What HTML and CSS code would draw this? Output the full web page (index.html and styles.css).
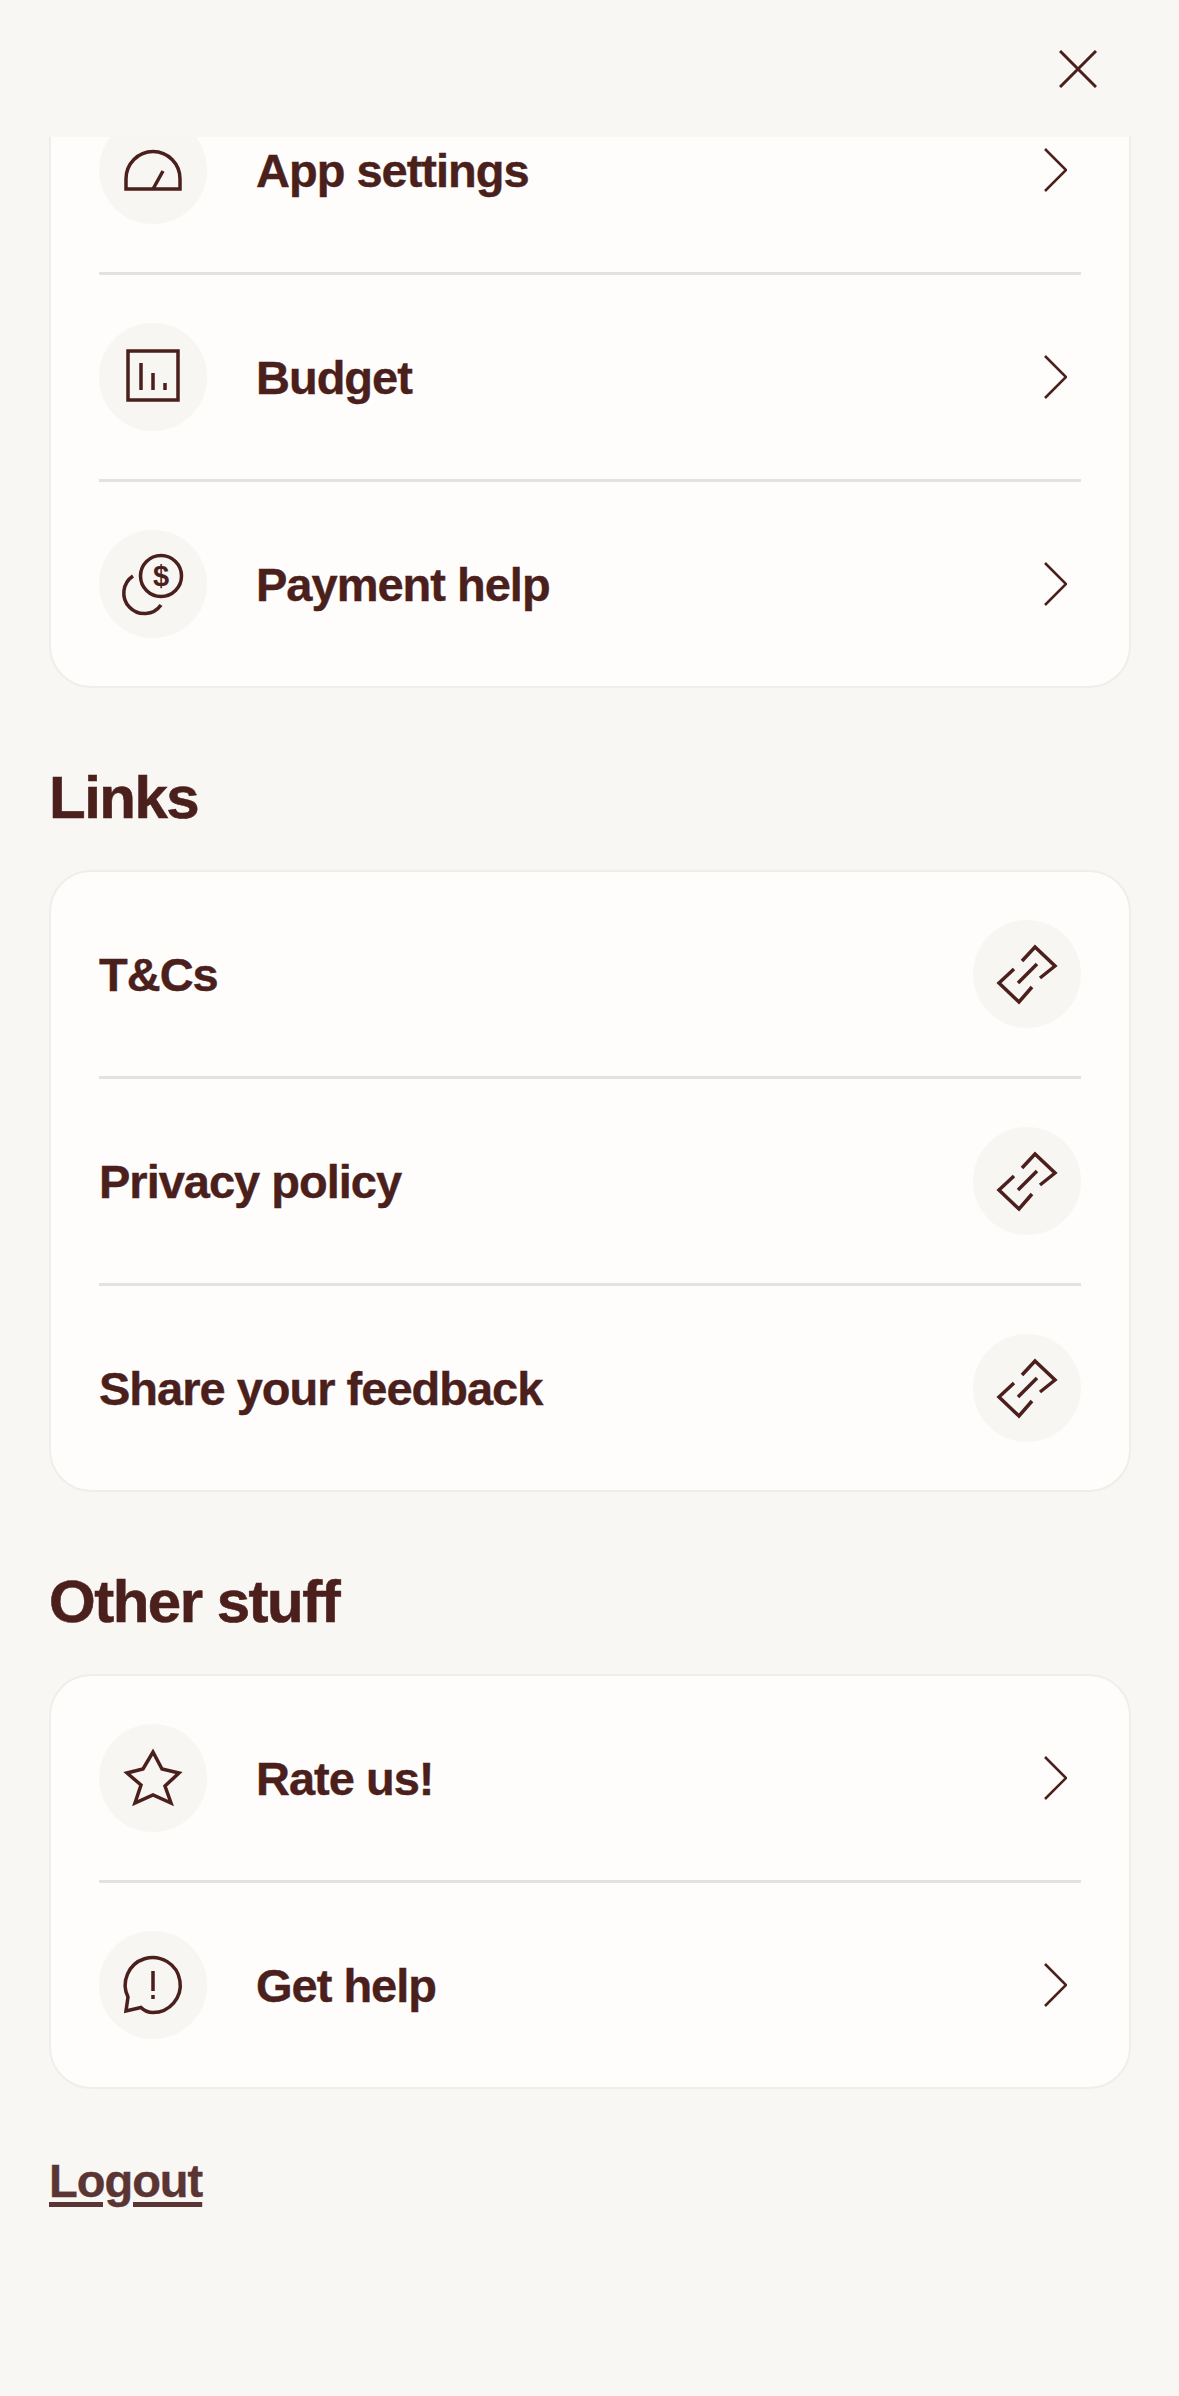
FILE: index.html
```html
<!DOCTYPE html>
<html>
  <head>
    <title>Menu</title>
    <meta name="viewport" content="width=device-width, initial-scale=1.0">
    <link rel="stylesheet" href="styles.css">
  </head>
  <body>
    <header class="top-bar">
      <svg class="close" viewBox="0 0 38 38"><path d="M1 1L37 37M37 1L1 37"/></svg>
    </header>

    <main class="content">
      <section class="card card-scrolled">
        <div class="row">
          <span class="circle">
            <svg viewBox="0 0 108 108"><path d="M27 73V63A27 27.500 0 0 1 81 63V73ZM54 73L64 55"/></svg>
          </span>
          <span class="label">App settings</span>
          <svg class="chevron" viewBox="0 0 24 44"><path d="M2 1L23 22L2 43"/></svg>
        </div>
        <div class="row">
          <span class="circle">
            <svg viewBox="0 0 108 108"><path d="M29 28H79V77H29ZM42 40V67M54 50V67M66 60V67"/></svg>
          </span>
          <span class="label">Budget</span>
          <svg class="chevron" viewBox="0 0 24 44"><path d="M2 1L23 22L2 43"/></svg>
        </div>
        <div class="row">
          <span class="circle">
            <svg viewBox="0 0 108 108">
              <circle cx="62" cy="46" r="20.500"/>
              <path d="M34 46A20.500 20.500 0 1 0 62 75"/>
              <text class="dollar" x="62" y="56" text-anchor="middle">$</text>
            </svg>
          </span>
          <span class="label">Payment help</span>
          <svg class="chevron" viewBox="0 0 24 44"><path d="M2 1L23 22L2 43"/></svg>
        </div>
      </section>

      <h2 class="section-title">Links</h2>
      <section class="card">
        <div class="row row-link">
          <span class="label">T&amp;Cs</span>
          <span class="circle">
            <svg viewBox="0 0 108 108"><path d="M49 41L62 27L82 46L67 58M41 49L26 63L46 82L59 67M45 63L64 44"/></svg>
          </span>
        </div>
        <div class="row row-link">
          <span class="label">Privacy policy</span>
          <span class="circle">
            <svg viewBox="0 0 108 108"><path d="M49 41L62 27L82 46L67 58M41 49L26 63L46 82L59 67M45 63L64 44"/></svg>
          </span>
        </div>
        <div class="row row-link">
          <span class="label">Share your feedback</span>
          <span class="circle">
            <svg viewBox="0 0 108 108"><path d="M49 41L62 27L82 46L67 58M41 49L26 63L46 82L59 67M45 63L64 44"/></svg>
          </span>
        </div>
      </section>

      <h2 class="section-title">Other stuff</h2>
      <section class="card">
        <div class="row">
          <span class="circle">
            <svg viewBox="0 0 108 108"><path d="M54 28L63 45L80 49L66 62L72 79L54 71L36 79L42 61L28 49L44 45Z"/></svg>
          </span>
          <span class="label">Rate us!</span>
          <svg class="chevron" viewBox="0 0 24 44"><path d="M2 1L23 22L2 43"/></svg>
        </div>
        <div class="row">
          <span class="circle">
            <svg viewBox="0 0 108 108"><path d="M29 66L27 80L42 76.500Q47 81.500 54 81.500A27.500 27.500 0 1 0 29 66ZM54 40V60M54 64V68"/></svg>
          </span>
          <span class="label">Get help</span>
          <svg class="chevron" viewBox="0 0 24 44"><path d="M2 1L23 22L2 43"/></svg>
        </div>
      </section>

      <a class="logout" href="#">Logout</a>
    </main>
  </body>
</html>
```

FILE: styles.css
```css
html, body {
  margin: 0;
  height: 100%;
  background-color: #f8f7f4;
}
body {
  overflow: hidden;
  color: #4a1f1c;
  font-family: "Liberation Sans", Arial, sans-serif;
  font-weight: bold;
}
.top-bar {
  position: relative;
  z-index: 1;
  display: flex;
  justify-content: flex-end;
  align-items: center;
  height: 137px;
  padding: 3px 82px 0 0;
  box-sizing: border-box;
  background-color: #f8f7f4;
}
.close {
  width: 38px;
  height: 38px;
  margin-top: -2px;
}
.close path {
  fill: none;
  stroke: #4a1f1c;
  stroke-width: 3;
}
.content {
  padding: 0 48px 0 49px;
}
.card {
  background-color: #fefdfb;
  border: 2px solid #efeeeb;
  border-radius: 42px;
  padding: 0 48px;
}
/* first card is scrolled up under the top bar */
.card-scrolled {
  margin-top: -71px;
}
.row {
  display: flex;
  align-items: center;
  gap: 49px;
  height: 204px;
  border-bottom: 3px solid #e3e2e0;
}
.row:last-child {
  border-bottom: none;
}
.row-link {
  justify-content: space-between;
}
.circle {
  flex: none;
  width: 108px;
  height: 108px;
  border-radius: 50%;
  background-color: #f7f6f3;
}
.circle svg {
  display: block;
  width: 108px;
  height: 108px;
  fill: none;
  stroke: #4a1f1c;
  stroke-width: 3.500;
}
.circle .dollar {
  fill: #4a1f1c;
  stroke: none;
  font-size: 29px;
  font-weight: bold;
}
.label {
  font-size: 47px;
  letter-spacing: -1px;
  -webkit-text-stroke: 0.400px #4a1f1c;
}
.chevron {
  width: 24px;
  height: 44px;
  margin-left: auto;
  margin-right: 14px;
}
.chevron path {
  fill: none;
  stroke: #4a1f1c;
  stroke-width: 2.500;
}
.section-title {
  margin: 0;
  padding: 74px 0 36px;
  font-size: 60px;
  line-height: 72px;
  letter-spacing: -1.500px;
  -webkit-text-stroke: 0.600px #4a1f1c;
}
.logout {
  display: inline-block;
  margin-top: 64px;
  font-size: 47px;
  letter-spacing: -1px;
  color: #5a3533;
  -webkit-text-stroke: 0.400px #5a3533;
  text-decoration: underline;
  text-decoration-thickness: 5px;
  text-underline-offset: 5px;
}
```
